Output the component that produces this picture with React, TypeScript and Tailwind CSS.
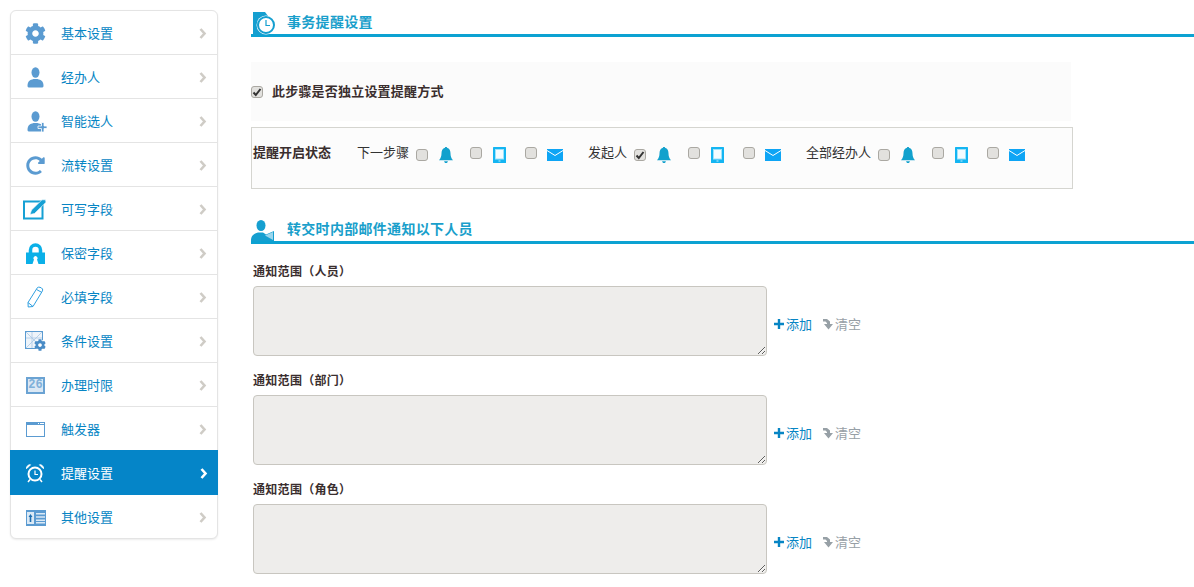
import React from "react";
import { FaCog, FaRedoAlt } from "react-icons/fa";

const SOFT_BLUE = "#5b9bd1";

function PersonIcon({ plus }: { plus?: boolean }) {
  return (
    <svg width="22" height="22" viewBox="0 0 22 22">
      <ellipse cx="10.500" cy="6.500" rx="4" ry="5.200" fill={SOFT_BLUE} />
      <path d="M2.500 20c0-5 2.500-6 6-7h4c3.500 1 6 2 6 7 0 1-1 1.500-2 1.500H4.500c-1 0-2-.5-2-1.500z" fill={SOFT_BLUE} />
      {plus && (
        <path d="M13 16h3.500v-3.500h2.500V16h3v2.500h-3V22h-2.500v-3.500H13z" fill={SOFT_BLUE} stroke="#fff" strokeWidth="0.8" />
      )}
    </svg>
  );
}

function EditIcon() {
  return (
    <svg width="25" height="21" viewBox="0 0 25 21">
      <path d="M1 2.500h18.500v17H1z" fill="#fff" stroke="#15a0d4" strokeWidth="2" />
      <path d="M7 15.500l1.500-4.500L19 .8l3.500 0 .5 2.500L11.500 14.500z" fill="#15a0d4" stroke="#fff" strokeWidth="0.6" />
    </svg>
  );
}

function LockIcon() {
  return (
    <svg width="19" height="21" viewBox="0 0 19 21">
      <path d="M4.500 10V7a5 5 0 0 1 10 0v3" fill="none" stroke="#0bb0e8" strokeWidth="3.500" />
      <path d="M0 9.500h19V21h-6.500l-1.500-4.500a2 2 0 1 0-3 0L6.500 21H0z" fill="#0bb0e8" />
    </svg>
  );
}

function PencilIcon() {
  return (
    <svg width="17" height="22" viewBox="0 0 17 22" fill="none" stroke="#2f9fe0" strokeWidth="1">
      <path d="M1 16.500L10.500 1.500c1-.8 4-.2 5 1.500.3.800.2 1.500-.2 2.200L6 20.500 1.200 21z" />
      <path d="M9.500 3.500l5.500 3M1 16.500l5 4" />
    </svg>
  );
}

function ConditionIcon() {
  return (
    <svg width="21" height="20" viewBox="0 0 21 20">
      <rect x="0.500" y="0.500" width="17" height="17" fill="#eef4fa" stroke={SOFT_BLUE} />
      <path d="M1 1l16 16M17 1L1 17M1 7h16M7 1v16" stroke="#a9c8e4" strokeWidth="0.8" />
      <g transform="translate(9 8)">
        <circle cx="6" cy="6" r="5.500" fill="#fff" />
        <FaCog size={12} color="#4a8cc6" />
      </g>
    </svg>
  );
}

function DateIcon() {
  return (
    <div className="flex w-[19px] h-[17px] items-center justify-center bg-[#dbe8f4] border-2 border-[#6ba3d3] font-['Liberation_Mono',monospace] text-[12px] font-bold leading-none text-[#7fb0d9]">
      26
    </div>
  );
}

function WindowIcon() {
  return (
    <svg width="19" height="15" viewBox="0 0 19 15">
      <rect x="0.500" y="0.500" width="18" height="14" fill="#fff" stroke={SOFT_BLUE} />
      <rect x="0" y="0" width="19" height="3" fill={SOFT_BLUE} />
      <rect x="12" y="1" width="1" height="1" fill="#fff" />
      <rect x="14" y="1" width="4" height="1" fill="#fff" />
    </svg>
  );
}

function AlarmIcon() {
  return (
    <svg width="20" height="20" viewBox="0 0 20 20" fill="none" stroke="#fff">
      <circle cx="10" cy="11" r="6.500" strokeWidth="2" />
      <path d="M10 7.500V11.500h3" strokeWidth="1.200" />
      <path d="M1.500 5.500C1.500 3 3.500 1.500 5.500 1.800L1.800 5.500zM18.500 5.500C18.500 3 16.500 1.500 14.500 1.800l3.700 3.700z" fill="#fff" strokeWidth="1" />
      <path d="M5 16.500l-2 2.500M15 16.500l2 2.500" strokeWidth="1.500" />
    </svg>
  );
}

function ListIcon() {
  return (
    <svg width="20" height="16" viewBox="0 0 20 16">
      <rect width="20" height="16" fill={SOFT_BLUE} />
      <rect x="1" y="2" width="7" height="12" fill="#dbe9f5" />
      <path d="M4.500 4l2 3H5.300v5H3.700V7H2.500z" fill="#1d6fb0" />
      <path d="M10 3h9v1.500h-9zM10 6.300h9v1.500h-9zM10 9.600h9v1.500h-9zM10 12h9v1.500h-9z" fill="#dbe9f5" />
    </svg>
  );
}

const menu: { label: string; icon: React.ReactNode; active?: boolean }[] = [
  { label: "基本设置", icon: <FaCog size={21} color={SOFT_BLUE} /> },
  { label: "经办人", icon: <PersonIcon /> },
  { label: "智能选人", icon: <PersonIcon plus /> },
  { label: "流转设置", icon: <FaRedoAlt size={19} color={SOFT_BLUE} /> },
  { label: "可写字段", icon: <EditIcon /> },
  { label: "保密字段", icon: <LockIcon /> },
  { label: "必填字段", icon: <PencilIcon /> },
  { label: "条件设置", icon: <ConditionIcon /> },
  { label: "办理时限", icon: <DateIcon /> },
  { label: "触发器", icon: <WindowIcon /> },
  { label: "提醒设置", icon: <AlarmIcon />, active: true },
  { label: "其他设置", icon: <ListIcon /> },
];

function Chevron({ active }: { active?: boolean }) {
  return (
    <svg width="8" height="11" viewBox="0 0 8 11" className="ml-auto mr-[10px]">
      <path d="M1.500 1l4 4.500-4 4.500" fill="none" stroke={active ? "#fff" : "#cfccc6"} strokeWidth="2.600" />
    </svg>
  );
}

function Sidebar() {
  return (
    <div className="w-[208px] shrink-0 h-[529px] rounded-[6px] border border-[#e4e4e4] bg-white shadow-[0_1px_2px_rgba(0,0,0,0.08)]">
      {menu.map((item) => (
        <div
          key={item.label}
          className={
            item.active
              ? "relative -mx-px -mt-px flex h-[45px] items-center bg-[#0585c8] pt-[1px] text-white"
              : "flex h-[44px] items-center pt-[1px] text-[#0785c4] border-b border-[#e4e4e4] last:border-b-0"
          }
        >
          <div className={item.active ? "w-[50px] flex justify-center" : "w-[49px] flex justify-center"}>
            {item.icon}
          </div>
          <span className="ml-[1px] text-[13px] leading-none">{item.label}</span>
          <Chevron active={item.active} />
        </div>
      ))}
    </div>
  );
}

function Check({ checked }: { checked?: boolean }) {
  return (
    <span className="relative inline-flex w-[12px] h-[12px] shrink-0 items-center justify-center rounded-[3px] border border-[#aaa8a2] bg-[#e2e1de]">
      {checked && (
        <svg width="10" height="10" viewBox="0 0 10 10" className="absolute">
          <path d="M1.500 5.500l2.300 2.500L8.500 2" fill="none" stroke="#333" strokeWidth="2" />
        </svg>
      )}
    </span>
  );
}

function BellIcon() {
  return (
    <svg width="14" height="16" viewBox="0 0 14 16">
      <path d="M6 .8a1 1 0 0 1 2 0c2.500.7 3.500 3 3.500 5.500 0 2.800.7 5 2.500 7H0c1.800-2 2.500-4.200 2.500-7C2.500 3.800 3.500 1.500 6 .8z" fill="#12a1cd" />
      <path d="M5 14.300h4L8 16H6z" fill="#12a1cd" />
    </svg>
  );
}

function TabletIcon() {
  return (
    <svg width="13" height="16" viewBox="0 0 13 16">
      <rect width="13" height="16" rx="0.500" fill="#14b5f2" />
      <rect x="2" y="2" width="9" height="10.500" fill="#9fe3fb" />
      <rect x="3" y="3" width="7" height="8.500" fill="#f4fcff" />
      <rect x="5.500" y="13.500" width="2" height="1" fill="#c8eefc" />
    </svg>
  );
}

function MailIcon() {
  return (
    <svg width="16" height="12" viewBox="0 0 16 12">
      <rect width="16" height="12" fill="#0ea5f5" />
      <path d="M0 1.500l8 5 8-5" fill="none" stroke="#fff" strokeWidth="1" />
    </svg>
  );
}

function Channels({ first }: { first?: boolean }) {
  return (
    <div className="flex items-center">
      <Check checked={first} />
      <span className="ml-[11px]"><BellIcon /></span>
      <span className="ml-[17px]"><Check /></span>
      <span className="ml-[11px]"><TabletIcon /></span>
      <span className="ml-[19px]"><Check /></span>
      <span className="ml-[10px]"><MailIcon /></span>
    </div>
  );
}

function SectionTitle({ icon, title }: { icon: React.ReactNode; title: string }) {
  return (
    <div className="flex h-[24px] items-end border-b-[3px] border-[#0ca2d2]">
      <div className="w-[36px] h-[23px] shrink-0 -mb-[1px]">{icon}</div>
      <h2 className="h-[21px] text-[14px] font-bold leading-[18px] tracking-[0.3px] text-[#1a9fcb]">{title}</h2>
    </div>
  );
}

function ScopeField({ label }: { label: string }) {
  return (
    <div className="h-[109px]">
      <div className="ml-[2px] h-[22px] text-[12px] font-bold leading-[16px] tracking-[0.3px] text-[#3a2e2e]">{label}</div>
      <div className="flex items-center">
        <textarea
          readOnly
          className="ml-[2px] block w-[514px] h-[70px] rounded-[4px] border border-[#c8c6c0] bg-[#eeedeb] resize"
        />
        <div className="ml-[7px] mt-[6px] flex items-center text-[13px] leading-none">
          <svg width="10" height="10" viewBox="0 0 10 10">
            <path d="M5 0v10M0 5h10" stroke="#0785c4" strokeWidth="2.400" />
          </svg>
          <span className="ml-[2px] text-[#0785c4]">添加</span>
          <svg width="12" height="11" viewBox="0 0 12 11" className="ml-[10px]">
            <path d="M1 0h4l3 2.500V5h3l-4.500 5.500L2 5h3V4L3.500 2.500H1z" fill="#97a0a6" />
          </svg>
          <span className="ml-[1px] text-[#97a0a6]">清空</span>
        </div>
      </div>
    </div>
  );
}

export default function App() {
  return (
    <div className="flex h-[587px] w-[1194px] overflow-hidden bg-white font-['Liberation_Sans','Noto_Sans_CJK_SC',sans-serif] text-[#333]">
      <div className="pl-[10px] pt-[10px]">
        <Sidebar />
      </div>
      <main className="ml-[33px] flex-1 pt-[13px]">
        <SectionTitle
          title="事务提醒设置"
          icon={
            <svg width="25" height="23" viewBox="0 0 25 23" className="ml-[2px]">
              <path d="M0 0h12l3 4v19H0z" fill="#159fd0" />
              <circle cx="13" cy="13" r="9.500" fill="#fff" />
              <circle cx="13" cy="13" r="8" fill="#fff" stroke="#159fd0" strokeWidth="2" />
              <path d="M13 8v5.500h4" fill="none" stroke="#159fd0" strokeWidth="1.200" />
            </svg>
          }
        />
        <div className="mt-[25px] flex h-[59px] w-[820px] items-center bg-[#fbfbfb]">
          <Check checked />
          <span className="ml-[9px] text-[13px] font-bold tracking-[0.2px] text-[#3a2e2e]">此步骤是否独立设置提醒方式</span>
        </div>
        <div className="mt-[6px] flex h-[62px] w-[822px] items-start border border-[#d5d5d0] bg-[#fcfcfc] pt-[16px] pl-[1px] text-[13px] leading-[18px]">
          <span className="w-[104px] font-bold text-[#3a2e2e]">提醒开启状态</span>
          <span className="w-[59px]">下一步骤</span>
          <div className="mt-[2px]"><Channels /></div>
          <span className="ml-[25px] w-[46px]">发起人</span>
          <div className="mt-[2px]"><Channels first /></div>
          <span className="ml-[25px] w-[72px]">全部经办人</span>
          <div className="mt-[2px]"><Channels /></div>
        </div>
        <div className="mt-[31px]">
          <SectionTitle
            title="转交时内部邮件通知以下人员"
            icon={
              <svg width="23" height="21" viewBox="0 0 23 21" className="mt-[1px]">
                <ellipse cx="10" cy="5.500" rx="4.500" ry="5.500" fill="#159fd0" />
                <path d="M0 21c0-5 2-7 7-8.500h5l3 2 8-3.500v10z" fill="#159fd0" />
                <path d="M14 15.500l8-3.500v8z" fill="#9bd6ec" />
              </svg>
            }
          />
        </div>
        <div className="mt-[20px]">
          <ScopeField label="通知范围（人员）" />
          <ScopeField label="通知范围（部门）" />
          <ScopeField label="通知范围（角色）" />
        </div>
      </main>
    </div>
  );
}
